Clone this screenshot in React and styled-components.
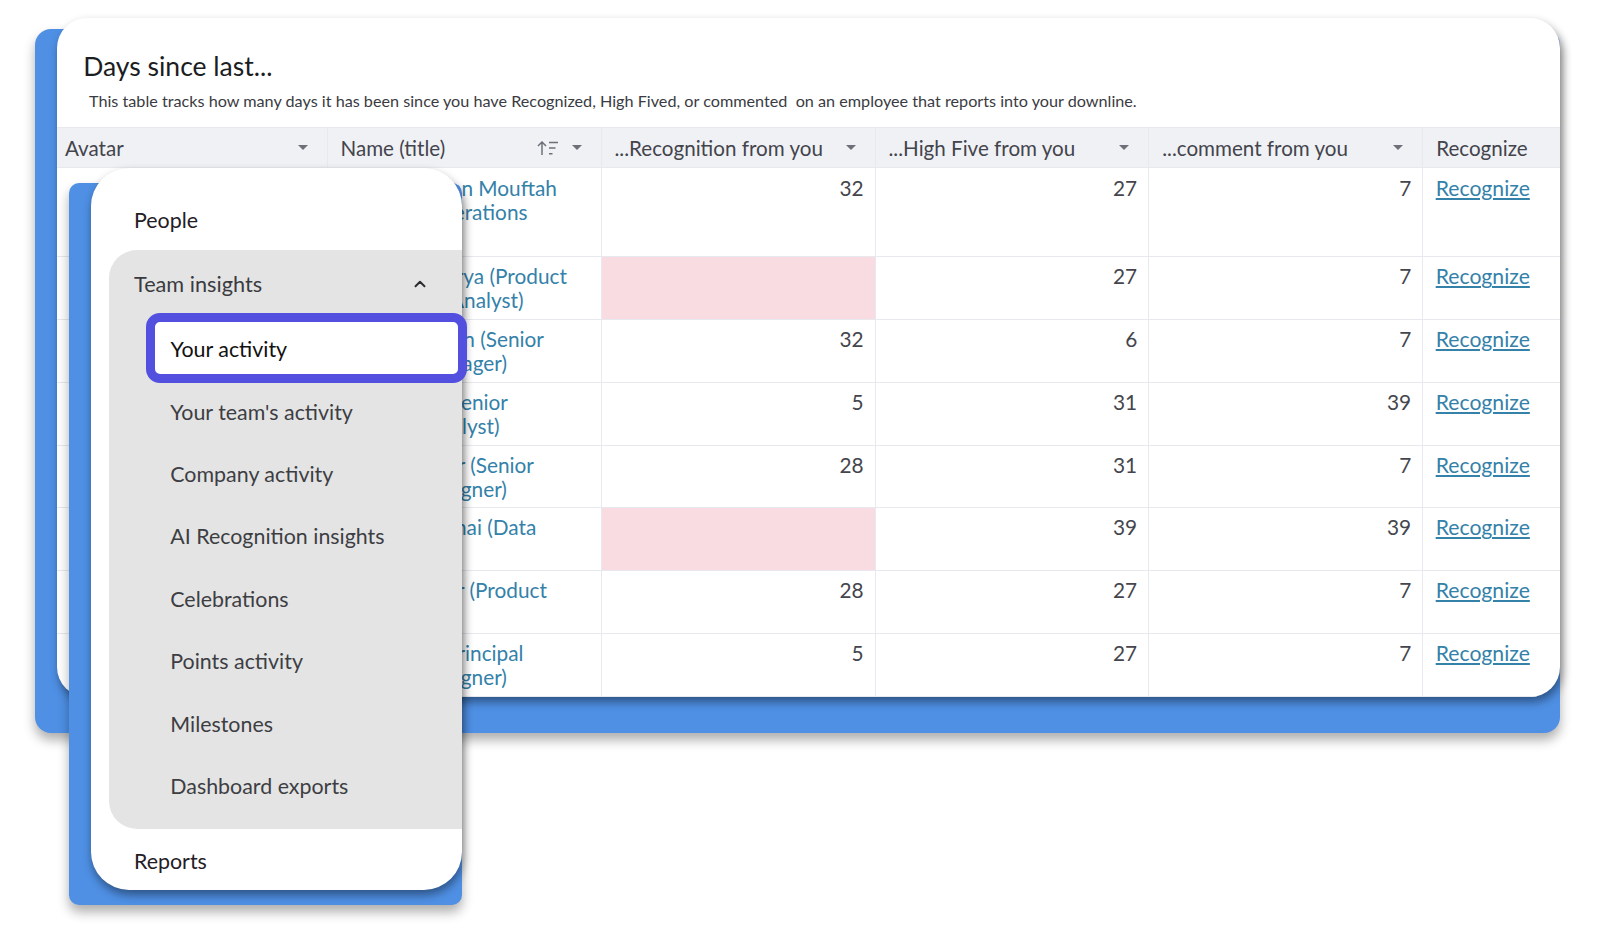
import React from 'react';
import styled, { createGlobalStyle } from 'styled-components';
import { ChevronUp } from 'lucide-react';

const GlobalStyle = createGlobalStyle`
  html, body {
    margin: 0;
    background: #fff;
    font-family: Lato, 'Open Sans', sans-serif;
  }
`;

const Page = styled.div`
  position: relative;
  width: 1610px;
  height: 936px;
  overflow: hidden;
  padding: 29px 50px 0 34.5px;
  box-sizing: border-box;
`;

const TableBacking = styled.div`
  display: flow-root;
  background: #4f90e5;
  border-radius: 16px;
  padding: 0 0 36px 22.5px;
  box-shadow: 0 7px 12px rgba(0, 0, 0, 0.32);
`;

const TableCard = styled.section`
  margin-top: -11.3px;
  background: #fff;
  border-radius: 30px;
  box-shadow: 2px 5px 10px rgba(0, 0, 0, 0.42);
`;

const TableClip = styled.div`
  border-radius: 30px;
  overflow: hidden;
`;

const Heading = styled.header`
  height: 109.3px;
  box-sizing: border-box;
  padding-top: 30px;
`;

const Title = styled.h1`
  margin: 0 0 0 26.2px;
  font-size: 26.5px;
  line-height: 36px;
  font-weight: 400;
  color: #1c1d22;
`;

const Subtitle = styled.p`
  margin: -1px 0 0 32px;
  font-size: 16.2px;
  line-height: 36px;
  white-space: pre;
  color: #3a3b42;
`;

const HeaderRow = styled.div`
  display: grid;
  grid-template-columns: 270.5px 274px 274px 273.7px 274px 137px;
  height: 41px;
  background: #f0f1f5;
  border-top: 1.5px solid #e8e9ee;
  border-bottom: 1.5px solid #e8e9ee;
  box-sizing: border-box;
`;

const HeaderCell = styled.div`
  display: flex;
  align-items: center;
  padding: 0 13px;
  padding-left: ${(p) => (p.$first ? '8px' : '13px')};
  border-right: ${(p) => (p.$last ? 'none' : '1.5px solid #e8e9ee')};
  font-size: 20.6px;
  color: #43444c;
  white-space: nowrap;
`;

const HeaderLabel = styled.span`
  flex: 1;
`;

const Caret = styled.span`
  width: 0;
  height: 0;
  margin-right: 6px;
  border-left: 5.5px solid transparent;
  border-right: 5.5px solid transparent;
  border-top: 5.5px solid #6d7078;
`;

const SortIcon = styled.svg`
  width: 22px;
  height: 14px;
  margin-right: 13px;
`;

const Row = styled.div`
  display: grid;
  grid-template-columns: 270.5px 274px 274px 273.7px 274px 137px;
  height: ${(p) => p.$height}px;
  box-sizing: border-box;
  border-bottom: 1.5px solid #e8e9ee;
`;

const Cell = styled.div`
  padding: ${(p) => (p.$tall ? '8px' : '7px')} 11px 0 ${(p) => (p.$last ? '12.5px' : '13px')};
  border-right: ${(p) => (p.$last ? 'none' : '1.5px solid #e8e9ee')};
  background: ${(p) => (p.$alert ? '#f8dce2' : 'transparent')};
  font-size: 20.8px;
  line-height: 24px;
  color: #44454d;
  text-align: ${(p) => (p.$number ? 'right' : 'left')};
  white-space: nowrap;
`;

const NameLine = styled.div`
  color: #3481a9;
  text-align: right;
`;

const RecognizeLink = styled.a`
  color: #3481a9;
  font-size: 21.2px;
  text-decoration: underline;
`;

const MenuBacking = styled.div`
  position: absolute;
  left: 69px;
  top: 183.3px;
  width: 393px;
  height: 721.5px;
  box-sizing: border-box;
  padding: 0 0 15px 22px;
  background: #4f90e5;
  border-radius: 10px;
  box-shadow: 0 7px 12px rgba(0, 0, 0, 0.32);
`;

const Menu = styled.nav`
  height: 721.5px;
  margin-top: -15px;
  box-sizing: border-box;
  background: #fff;
  border-radius: 38px;
  box-shadow: 1px 5px 10px rgba(0, 0, 0, 0.42);
`;

const TopItem = styled.div`
  display: flex;
  align-items: center;
  height: ${(p) => p.$height}px;
  padding-left: 43px;
  padding-top: ${(p) => p.$top || 0}px;
  box-sizing: border-box;
  font-size: 21.4px;
  color: #1f2025;
`;

const Group = styled.div`
  margin-left: 18.3px;
  padding-bottom: 11.7px;
  background: #e4e4e4;
  border-radius: 28px 0 0 28px;
`;

const GroupHead = styled.div`
  display: flex;
  align-items: center;
  justify-content: space-between;
  height: 68px;
  padding: 0 33.5px 0 24.7px;
  box-sizing: border-box;
  font-size: 21.7px;
  color: #3a3b40;
`;

const SubItem = styled.div`
  display: flex;
  align-items: center;
  height: 62.43px;
  padding-left: 61px;
  font-size: 21.4px;
  color: #3d3e43;
`;

const ActiveItem = styled.div`
  display: flex;
  align-items: center;
  position: relative;
  height: 70px;
  margin: -5.3px -4.5px -2.3px 36.5px;
  padding: 3.5px 0 0 15.6px;
  box-sizing: border-box;
  background: #fff;
  border: 9.7px solid #5350e0;
  border-radius: 14px;
  font-size: 21.4px;
  color: #111;
`;

const rows = [
  {
    height: 89.3,
    name: [['Ahmed Hasan Mouftah', 216.4], ['(Head of Operations', 187], ['Lead)', 60]],
    cells: [32, 27, 7],
  },
  {
    height: 62.75,
    name: [['Priya Acharya (Product', 226.4], ['Marketing Analyst)', 183]],
    cells: [null, 27, 7],
  },
  {
    height: 62.75,
    name: [['Daniel Cohen (Senior', 203.4], ['Account Manager)', 165]],
    cells: [32, 6, 7],
  },
  {
    height: 62.75,
    name: [['Nadia Ali (Senior', 167.4], ['Business Analyst)', 159]],
    cells: [5, 31, 39],
  },
  {
    height: 62.75,
    name: [['Amy Carter (Senior', 193.4], ['Product Designer)', 166.4]],
    cells: [28, 31, 7],
  },
  {
    height: 62.75,
    name: [['Ravi Shenai (Data', 195.8], ['Engineer)', 90]],
    cells: [null, 39, 39],
  },
  {
    height: 62.75,
    name: [['Lena Baker (Product', 206.4], ['Manager)', 90]],
    cells: [28, 27, 7],
  },
  {
    height: 62.75,
    name: [['Omar Ali (Principal', 183], ['Product Designer)', 166.4]],
    cells: [5, 27, 7],
  },
];

const subItems = [
  "Your team's activity",
  'Company activity',
  'AI Recognition insights',
  'Celebrations',
  'Points activity',
  'Milestones',
  'Dashboard exports',
];

const columns = ['...Recognition from you', '...High Five from you', '...comment from you'];

const App = () => {
  return (
    <Page>
      <GlobalStyle />
      <TableBacking>
        <TableCard>
          <TableClip>
            <Heading>
              <Title>Days since last...</Title>
              <Subtitle>
                This table tracks how many days it has been since you have Recognized, High Fived, or commented  on an employee that reports into your downline.
              </Subtitle>
            </Heading>

            <HeaderRow>
              <HeaderCell $first>
                <HeaderLabel>Avatar</HeaderLabel>
                <Caret />
              </HeaderCell>
              <HeaderCell>
                <HeaderLabel>Name (title)</HeaderLabel>
                <SortIcon viewBox='0 0 22 14' fill='none' stroke='#6d7078' strokeWidth='1.5'>
                  <path d='M5 14V1M1 5l4-4 4 4' />
                  <path d='M12 1.5h9M12 7h6.5M12 12.8h3.5' />
                </SortIcon>
                <Caret />
              </HeaderCell>
              {columns.map((label) => (
                <HeaderCell key={label}>
                  <HeaderLabel>{label}</HeaderLabel>
                  <Caret />
                </HeaderCell>
              ))}
              <HeaderCell $last>Recognize</HeaderCell>
            </HeaderRow>

            {rows.map((row, i) => (
              <Row key={i} $height={row.height}>
                <Cell $tall={i === 0} />
                <Cell $tall={i === 0}>
                  {row.name.map(([text, width]) => (
                    <NameLine key={text} style={{ width }}>{text}</NameLine>
                  ))}
                </Cell>
                {row.cells.map((value, j) => (
                  <Cell key={j} $tall={i === 0} $number $alert={value === null}>{value}</Cell>
                ))}
                <Cell $tall={i === 0} $last>
                  <RecognizeLink href='#'>Recognize</RecognizeLink>
                </Cell>
              </Row>
            ))}
          </TableClip>
        </TableCard>
      </TableBacking>

      <MenuBacking>
        <Menu>
          <TopItem $height={81.7} $top={21.7}>People</TopItem>
          <Group>
            <GroupHead>
              Team insights
              <ChevronUp size={18} strokeWidth={2.6} color='#2b2c30' />
            </GroupHead>
            <ActiveItem>Your activity</ActiveItem>
            {subItems.map((label) => (
              <SubItem key={label}>{label}</SubItem>
            ))}
          </Group>
          <TopItem $height={63}>Reports</TopItem>
        </Menu>
      </MenuBacking>
    </Page>
  );
};

export default App;
